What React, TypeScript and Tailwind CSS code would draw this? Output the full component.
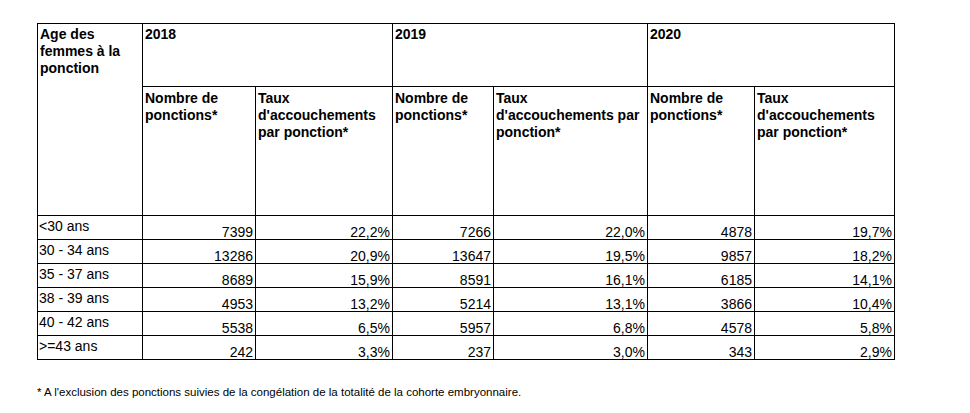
import React from "react";

const data: string[][] = [
  ["<30 ans", "7399", "22,2%", "7266", "22,0%", "4878", "19,7%"],
  ["30 - 34 ans", "13286", "20,9%", "13647", "19,5%", "9857", "18,2%"],
  ["35 - 37 ans", "8689", "15,9%", "8591", "16,1%", "6185", "14,1%"],
  ["38 - 39 ans", "4953", "13,2%", "5214", "13,1%", "3866", "10,4%"],
  ["40 - 42 ans", "5538", "6,5%", "5957", "6,8%", "4578", "5,8%"],
  [">=43 ans", "242", "3,3%", "237", "3,0%", "343", "2,9%"],
];

const years = ["2018", "2019", "2020"];

export default function App() {
  return (
    <div className="min-h-[413px] w-[970px] bg-white text-black font-['Liberation_Sans',Arial,sans-serif]">
      <div className="pl-[37px] pt-[22px]">
        <div className="inline-grid grid-cols-[104px_112px_136px_100px_153px_106px_139px] grid-rows-[62px_128px_repeat(6,23px)] gap-px bg-black p-px text-[14px]">
          <div className="row-span-2 bg-white pl-[2px] pt-[2px] font-bold leading-[17px]">
            Age des femmes à la ponction
          </div>
          {years.map((y) => (
            <div key={y} className="col-span-2 bg-white pl-[2px] pt-[2px] font-bold leading-[17px]">
              {y}
            </div>
          ))}
          {years.map((y) => (
            <React.Fragment key={"h" + y}>
              <div className="bg-white pl-[2px] pt-[3px] font-bold leading-[17px]">
                Nombre de ponctions*
              </div>
              <div className="bg-white pl-[2px] pt-[3px] font-bold leading-[17px]">
                Taux d'accouchements par ponction*
              </div>
            </React.Fragment>
          ))}
          {data.map((row) => (
            <React.Fragment key={row[0]}>
              <div className="bg-white pl-px pt-[3px] leading-[14px]">{row[0]}</div>
              {row.slice(1).map((v, i) => (
                <div key={i} className="flex items-end justify-end bg-white pr-[2px] leading-[14px]">
                  {v}
                </div>
              ))}
            </React.Fragment>
          ))}
        </div>
        <p className="mt-[26px] text-[11.5px] leading-[13px]">
          * A l'exclusion des ponctions suivies de la congélation de la totalité de la cohorte embryonnaire.
        </p>
      </div>
    </div>
  );
}
